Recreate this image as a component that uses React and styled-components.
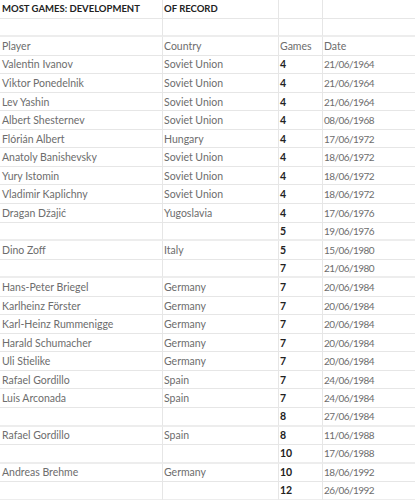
import React from "react";
import styled, { createGlobalStyle } from "styled-components";

const Global = createGlobalStyle`
  html, body { margin: 0; padding: 0; background: #ffffff; }
  body { font-family: Lato, "Noto Sans", "Liberation Sans", sans-serif; overflow: hidden; }
`;

const Sheet = styled.div`
  display: grid;
  grid-template-columns: 162px 116px 44px 93px;
  width: 415px;
`;

const Cell = styled.div`
  box-sizing: border-box;
  height: 18.55px;
  padding: 0 0 0 ${(p) => (p.$col === 0 ? 2 : 1)}px;
  display: flex;
  align-items: center;
  white-space: nowrap;
  overflow: hidden;
  font-size: 10.5px;
  color: #6d6d6d;
  border-bottom: ${(p) => (p.$thick ? "2px solid #ededed" : "1px solid #e6e6e6")};
  border-left: ${(p) => (p.$col === 0 ? "none" : "1px solid #e6e6e6")};
`;

const TitleCell = styled(Cell)`
  font-size: 9.5px;
  font-weight: 700;
  color: #222222;
`;

const GamesCell = styled(Cell)`
  font-weight: 700;
  color: #222222;
`;

const DateCell = styled(Cell)`
  font-size: 10px;
  letter-spacing: -0.55px;
`;

const rows = [
  ["Valentin Ivanov", "Soviet Union", "4", "21/06/1964"],
  ["Viktor Ponedelnik", "Soviet Union", "4", "21/06/1964"],
  ["Lev Yashin", "Soviet Union", "4", "21/06/1964"],
  ["Albert Shesternev", "Soviet Union", "4", "08/06/1968"],
  ["Flórián Albert", "Hungary", "4", "17/06/1972"],
  ["Anatoly Banishevsky", "Soviet Union", "4", "18/06/1972"],
  ["Yury Istomin", "Soviet Union", "4", "18/06/1972"],
  ["Vladimir Kaplichny", "Soviet Union", "4", "18/06/1972"],
  ["Dragan Džajić", "Yugoslavia", "4", "17/06/1976"],
  ["", "", "5", "19/06/1976"],
  ["Dino Zoff", "Italy", "5", "15/06/1980"],
  ["", "", "7", "21/06/1980"],
  ["Hans-Peter Briegel", "Germany", "7", "20/06/1984"],
  ["Karlheinz Förster", "Germany", "7", "20/06/1984"],
  ["Karl-Heinz Rummenigge", "Germany", "7", "20/06/1984"],
  ["Harald Schumacher", "Germany", "7", "20/06/1984"],
  ["Uli Stielike", "Germany", "7", "20/06/1984"],
  ["Rafael Gordillo", "Spain", "7", "24/06/1984"],
  ["Luis Arconada", "Spain", "7", "24/06/1984"],
  ["", "", "8", "27/06/1984"],
  ["Rafael Gordillo", "Spain", "8", "11/06/1988"],
  ["", "", "10", "17/06/1988"],
  ["Andreas Brehme", "Germany", "10", "18/06/1992"],
  ["", "", "12", "26/06/1992"],
];

export default function App() {
  return (
    <>
      <Global />
      <Sheet>
        <TitleCell $col={0}>MOST GAMES: DEVELOPMENT</TitleCell>
        <TitleCell $col={1}>OF RECORD</TitleCell>
        <Cell $col={2} />
        <Cell $col={3} />
        <Cell $col={0} $thick />
        <Cell $col={1} $thick />
        <Cell $col={2} $thick />
        <Cell $col={3} $thick />
        <Cell $col={0}>Player</Cell>
        <Cell $col={1}>Country</Cell>
        <Cell $col={2}>Games</Cell>
        <Cell $col={3}>Date</Cell>
        {rows.map((r, i) => {
          const thick = r[0] === "";
          return (
            <React.Fragment key={i}>
              <Cell $col={0} $thick={thick}>{r[0]}</Cell>
              <Cell $col={1} $thick={thick}>{r[1]}</Cell>
              <GamesCell $col={2} $thick={thick}>{r[2]}</GamesCell>
              <DateCell $col={3} $thick={thick}>{r[3]}</DateCell>
            </React.Fragment>
          );
        })}
      </Sheet>
    </>
  );
}
